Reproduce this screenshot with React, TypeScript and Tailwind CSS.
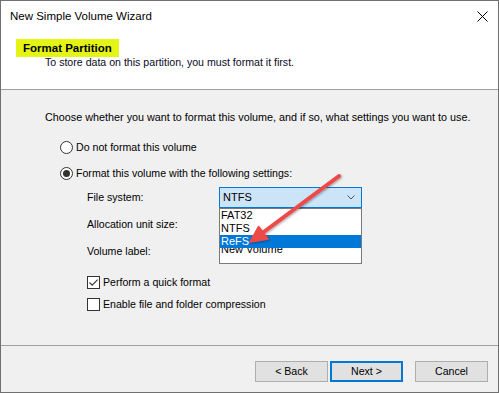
import React from "react";

function Radio({ checked }: { checked?: boolean }) {
  return (
    <span className="w-[13px] h-[13px] rounded-full border border-[#333333] bg-white flex items-center justify-center shrink-0">
      {checked && <span className="w-[7px] h-[7px] rounded-full bg-[#333333]" />}
    </span>
  );
}

function Check({ checked }: { checked?: boolean }) {
  return (
    <span className="w-[13px] h-[13px] border border-[#333333] bg-white shrink-0 flex items-center justify-center">
      {checked && (
        <svg width="11" height="11" viewBox="0 0 11 11">
          <path d="M1.5 5.5 L4.2 8.2 L9.6 2.6" fill="none" stroke="#333333" strokeWidth="1.1" />
        </svg>
      )}
    </span>
  );
}

function Btn({ label, primary }: { label: string; primary?: boolean }) {
  return (
    <div
      className={
        "w-[73px] h-[21px] bg-[#e1e1e1] flex items-center justify-center " +
        (primary ? "border-2 border-[#0078d7]" : "border border-[#adadad]")
      }
    >
      {label}
    </div>
  );
}

export default function App() {
  return (
    <div className="w-[499px] h-[393px] bg-[#f0f0f0] border border-[#707070] flex flex-col relative overflow-hidden font-['Liberation_Sans',Arial,sans-serif] text-[10.6px] leading-[15px] text-black whitespace-nowrap">
      {/* title bar */}
      <div className="h-[30px] bg-white flex items-center justify-between pl-[9px] pr-[10px] shrink-0">
        <span className="text-[11.5px]">New Simple Volume Wizard</span>
        <svg width="11" height="11" viewBox="0 0 11 11">
          <path d="M0.5 0.5 L10.5 10.5 M10.5 0.5 L0.5 10.5" stroke="#000" strokeWidth="1" />
        </svg>
      </div>
      {/* header */}
      <div className="h-[58px] bg-white pt-[8px] shrink-0">
        <div className="ml-[15px] inline-block bg-[#e4f516] px-[7px] h-[18px] leading-[18px] font-bold text-[11.5px]">
          Format Partition
        </div>
        <div className="pl-[44px] mt-[-2px] text-[#0a0a1e]">
          To store data on this partition, you must format it first.
        </div>
      </div>
      <div className="h-px bg-[#a0a0a0] shrink-0" />
      {/* content */}
      <div className="flex-1 flex flex-col">
        <div className="mt-[20px] pl-[44px] text-[10.8px]">
          Choose whether you want to format this volume, and if so, what settings you want to use.
        </div>
        <div className="mt-[15px] pl-[59px] flex items-center gap-[3px]">
          <Radio />
          <span>Do not format this volume</span>
        </div>
        <div className="mt-[11px] pl-[59px] flex items-center gap-[3px]">
          <Radio checked />
          <span>Format this volume with the following settings:</span>
        </div>
        <div className="mt-[6px] pl-[86px] flex flex-col gap-[6px]">
          <div className="flex items-center h-[21px]">
            <span className="w-[132px]">File system:</span>
            <div className="relative w-[143px] h-[21px] bg-[#cce4f7] border border-[#0078d7] flex items-center justify-between pl-[3px] pr-[6px] text-[11px]">
              <span>NTFS</span>
              <svg width="8" height="5" viewBox="0 0 8 5">
                <path d="M0.5 0.5 L4 4 L7.5 0.5" fill="none" stroke="#555" strokeWidth="1" />
              </svg>
              <div className="absolute left-[-1px] top-[20px] w-[143px] h-[56px] bg-white border border-[#7a7a7a] flex flex-col leading-[13px] z-10">
                <div className="h-[13px] pl-[1px]">FAT32</div>
                <div className="h-[13px] pl-[1px]">NTFS</div>
                <div className="h-[13px] pl-[1px] bg-[#0078d7] text-white">ReFS</div>
                <div className="h-[7px] pl-[1px] overflow-hidden">
                  <div className="mt-[-5px]">New Volume</div>
                </div>
              </div>
            </div>
          </div>
          <div className="flex items-center h-[21px]">
            <span className="w-[132px]">Allocation unit size:</span>
          </div>
          <div className="flex items-center h-[21px]">
            <span className="w-[132px]">Volume label:</span>
          </div>
        </div>
        <div className="mt-[13px] pl-[86px] flex items-center gap-[3px]">
          <Check checked />
          <span>Perform a quick format</span>
        </div>
        <div className="mt-[7px] pl-[86px] flex items-center gap-[3px]">
          <Check />
          <span>Enable file and folder compression</span>
        </div>
      </div>
      <div className="h-px bg-[#a0a0a0] shrink-0" />
      <div className="h-[46px] shrink-0 flex justify-end items-start pt-[15px] pr-[10px]">
        <Btn label="< Back" />
        <div className="ml-[2px]">
          <Btn label="Next >" primary />
        </div>
        <div className="ml-[12px]">
          <Btn label="Cancel" />
        </div>
      </div>
      {/* red arrow annotation */}
      <svg className="absolute left-0 top-0 pointer-events-none z-20" width="499" height="393" viewBox="0 0 499 393">
        <defs>
          <filter id="sh" x="-20%" y="-20%" width="140%" height="140%">
            <feDropShadow dx="1" dy="1" stdDeviation="1.2" floodColor="#000" floodOpacity="0.35" />
          </filter>
        </defs>
        <g filter="url(#sh)">
          <line x1="338" y1="175" x2="260" y2="233" stroke="#ee4848" strokeWidth="4" strokeLinecap="round" />
          <path d="M249 241 L257.5 225.5 L267 238 Z" fill="#ee4848" stroke="#ee4848" strokeWidth="1.5" strokeLinejoin="round" />
        </g>
      </svg>
    </div>
  );
}
